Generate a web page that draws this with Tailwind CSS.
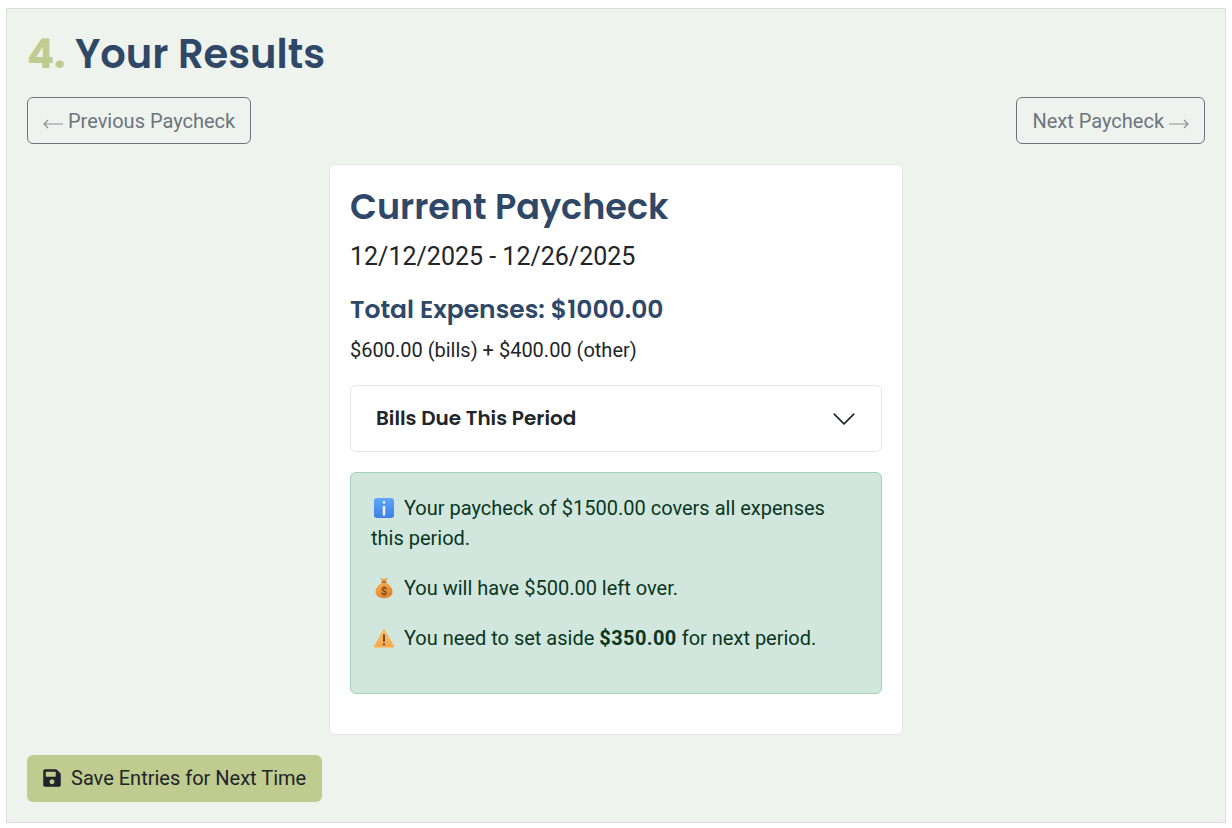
<!DOCTYPE html>
<html>
<head>
    <meta charset="UTF-8">
    <title>Your Results</title>
    <script src="https://cdn.jsdelivr.net/npm/@tailwindcss/browser@4"></script>
</head>
<body class="bg-white h-[828px] overflow-hidden font-['Roboto',sans-serif]">
    <div class="mt-[8px] mx-[6px] h-[815px] border border-[#dcdfdc] bg-[#eff3ee] px-5 pt-5">
        <h2 class="font-['Poppins','Inter',sans-serif] font-semibold text-[40px] leading-[50px] text-[#2f4868]"><span class="text-[#bfcb8f] font-bold">4.</span> Your Results</h2>
        <div class="mt-[18px] flex justify-between">
            <button class="h-[47px] px-[15px] border border-[#6c757d] rounded-md text-[#6c757d] text-[20px]">
                <svg class="inline-block w-5 h-[10px] align-[-1px]" viewBox="0 0 20 10" fill="none" stroke="#8a9298" stroke-width="1.200"><path d="M1 5h19M5 1 1 5l4 4"/></svg> Previous Paycheck
            </button>
            <button class="h-[47px] px-[15px] border border-[#6c757d] rounded-md text-[#6c757d] text-[20px]">
                Next Paycheck <svg class="inline-block w-5 h-[10px] align-[-1px]" viewBox="0 0 20 10" fill="none" stroke="#8a9298" stroke-width="1.200"><path d="M0 5h19M15 1l4 4-4 4"/></svg>
            </button>
        </div>
        <div class="mt-5 mx-auto w-[574px] h-[571px] bg-white border border-[#e3e6e3] rounded-md p-5">
            <h3 class="font-['Poppins','Inter',sans-serif] font-semibold text-[35px] leading-[44px] text-[#2f4868]">Current Paycheck</h3>
            <p class="mt-[13px] text-[25px] leading-[30px] text-[#212529]">12/12/2025 - 12/26/2025</p>
            <h4 class="mt-5 font-['Poppins','Inter',sans-serif] font-semibold text-[25px] leading-[36px] text-[#2f4868]">Total Expenses: $1000.00</h4>
            <p class="mt-[7px] text-[20px] leading-[30px] text-[#212529]">$600.00 (bills) + $400.00 (other)</p>
            <div class="mt-5 h-[67px] border border-[#e3e6e3] rounded-md flex items-center justify-between pl-[25px] pr-6">
                <span class="mb-[2px] font-['Poppins','Inter',sans-serif] font-semibold text-[20px] text-[#212529]">Bills Due This Period</span>
                <svg class="w-[26px] h-[26px]" viewBox="0 0 16 16" fill="#212529"><path fill-rule="evenodd" d="M1.646 4.646a.5.5 0 0 1 .708 0L8 10.293l5.646-5.647a.5.5 0 0 1 .708.708l-6 6a.5.5 0 0 1-.708 0l-6-6a.5.5 0 0 1 0-.708z"/></svg>
            </div>
            <div class="mt-5 h-[222px] bg-[#d1e7dd] border border-[#a3cfbb] rounded-md p-5 text-[20px] leading-[30px] text-[#0a3622]">
                <p>
                    <span class="inline-block w-[28px] align-[-4px]">
                        <svg class="w-[22px] h-[22px] ml-[2px]" viewBox="0 0 22 22">
                            <defs><linearGradient id="infoFill" x1="0" y1="0" x2="0" y2="1"><stop offset="0" stop-color="#5fa8f6"/><stop offset="1" stop-color="#3f7fe8"/></linearGradient></defs>
                            <rect x="1" y="1" width="20" height="20" rx="3" fill="url(#infoFill)"/><rect x="9.800" y="9" width="2.400" height="9.500" fill="#f3f6ff"/><rect x="9.800" y="4" width="2.400" height="2.800" rx="1.200" fill="#f3f6ff"/>
                        </svg>
                    </span> Your paycheck of $1500.00 covers all expenses this period.
                </p>
                <p class="mt-5">
                    <span class="inline-block w-[28px] align-[-4px]">
                        <svg class="w-[22px] h-[22px] ml-[2px]" viewBox="0 0 22 22">
                            <defs><linearGradient id="bagFill" x1="0" y1="0" x2="0.600" y2="1"><stop offset="0" stop-color="#fdb44e"/><stop offset="1" stop-color="#e07f2c"/></linearGradient></defs>
                            <path d="M7.500 .8 11 2l3.500-1.200-1.500 4H9z" fill="#f0a13f"/><rect x="8.500" y="4.300" width="5" height="1.600" rx=".8" fill="#a8602a"/><path d="M9 5.800h4c3.600 2.200 6.500 5.300 6.500 9 0 4-3.500 6.400-8.500 6.400s-8.500-2.400-8.500-6.400c0-3.700 2.900-6.800 6.500-9z" fill="url(#bagFill)"/><text x="11" y="18" font-size="11" text-anchor="middle" fill="#7f4420" font-family="Roboto" font-weight="700">$</text>
                        </svg>
                    </span> You will have $500.00 left over.
                </p>
                <p class="mt-5">
                    <span class="inline-block w-[28px] align-[-4px]">
                        <svg class="w-[22px] h-[22px] ml-[2px]" viewBox="0 0 22 22">
                            <defs><linearGradient id="warnFill" x1="0" y1="0" x2="0" y2="1"><stop offset="0" stop-color="#ffc26a"/><stop offset="1" stop-color="#fba64a"/></linearGradient></defs>
                            <path d="M11 2.500 21 20H1z" fill="url(#warnFill)" stroke="#fbb04a" stroke-width="1" stroke-linejoin="round"/><rect x="10.100" y="7" width="1.800" height="8" rx=".9" fill="#5b4636"/><circle cx="11" cy="17.400" r="1.100" fill="#5b4636"/>
                        </svg>
                    </span> You need to set aside <strong class="font-bold tracking-[0.4px]">$350.00</strong> for next period.
                </p>
            </div>
        </div>
        <button class="mt-5 h-[47px] px-4 pb-[2px] bg-[#bfcb8f] rounded-md text-[20px] text-[#212529] flex items-center gap-[10px]">
            <svg class="w-[18px] h-5" viewBox="0 0 448 512" fill="#212529"><path d="M433.900 129.900l-83.900-83.900A48 48 0 0 0 316.100 32H48C21.500 32 0 53.500 0 80v352c0 26.500 21.500 48 48 48h352c26.500 0 48-21.500 48-48V163.900a48 48 0 0 0-14.100-34zM224 416c-35.300 0-64-28.700-64-64s28.700-64 64-64 64 28.700 64 64-28.700 64-64 64zm96-304.500V212c0 6.600-5.400 12-12 12H76c-6.600 0-12-5.400-12-12V108c0-6.600 5.400-12 12-12h228.500c3.200 0 6.200 1.300 8.500 3.500l3.500 3.500c2.300 2.300 3.500 5.300 3.500 8.500z"/></svg>
            Save Entries for Next Time
        </button>
    </div>
</body>
</html>
